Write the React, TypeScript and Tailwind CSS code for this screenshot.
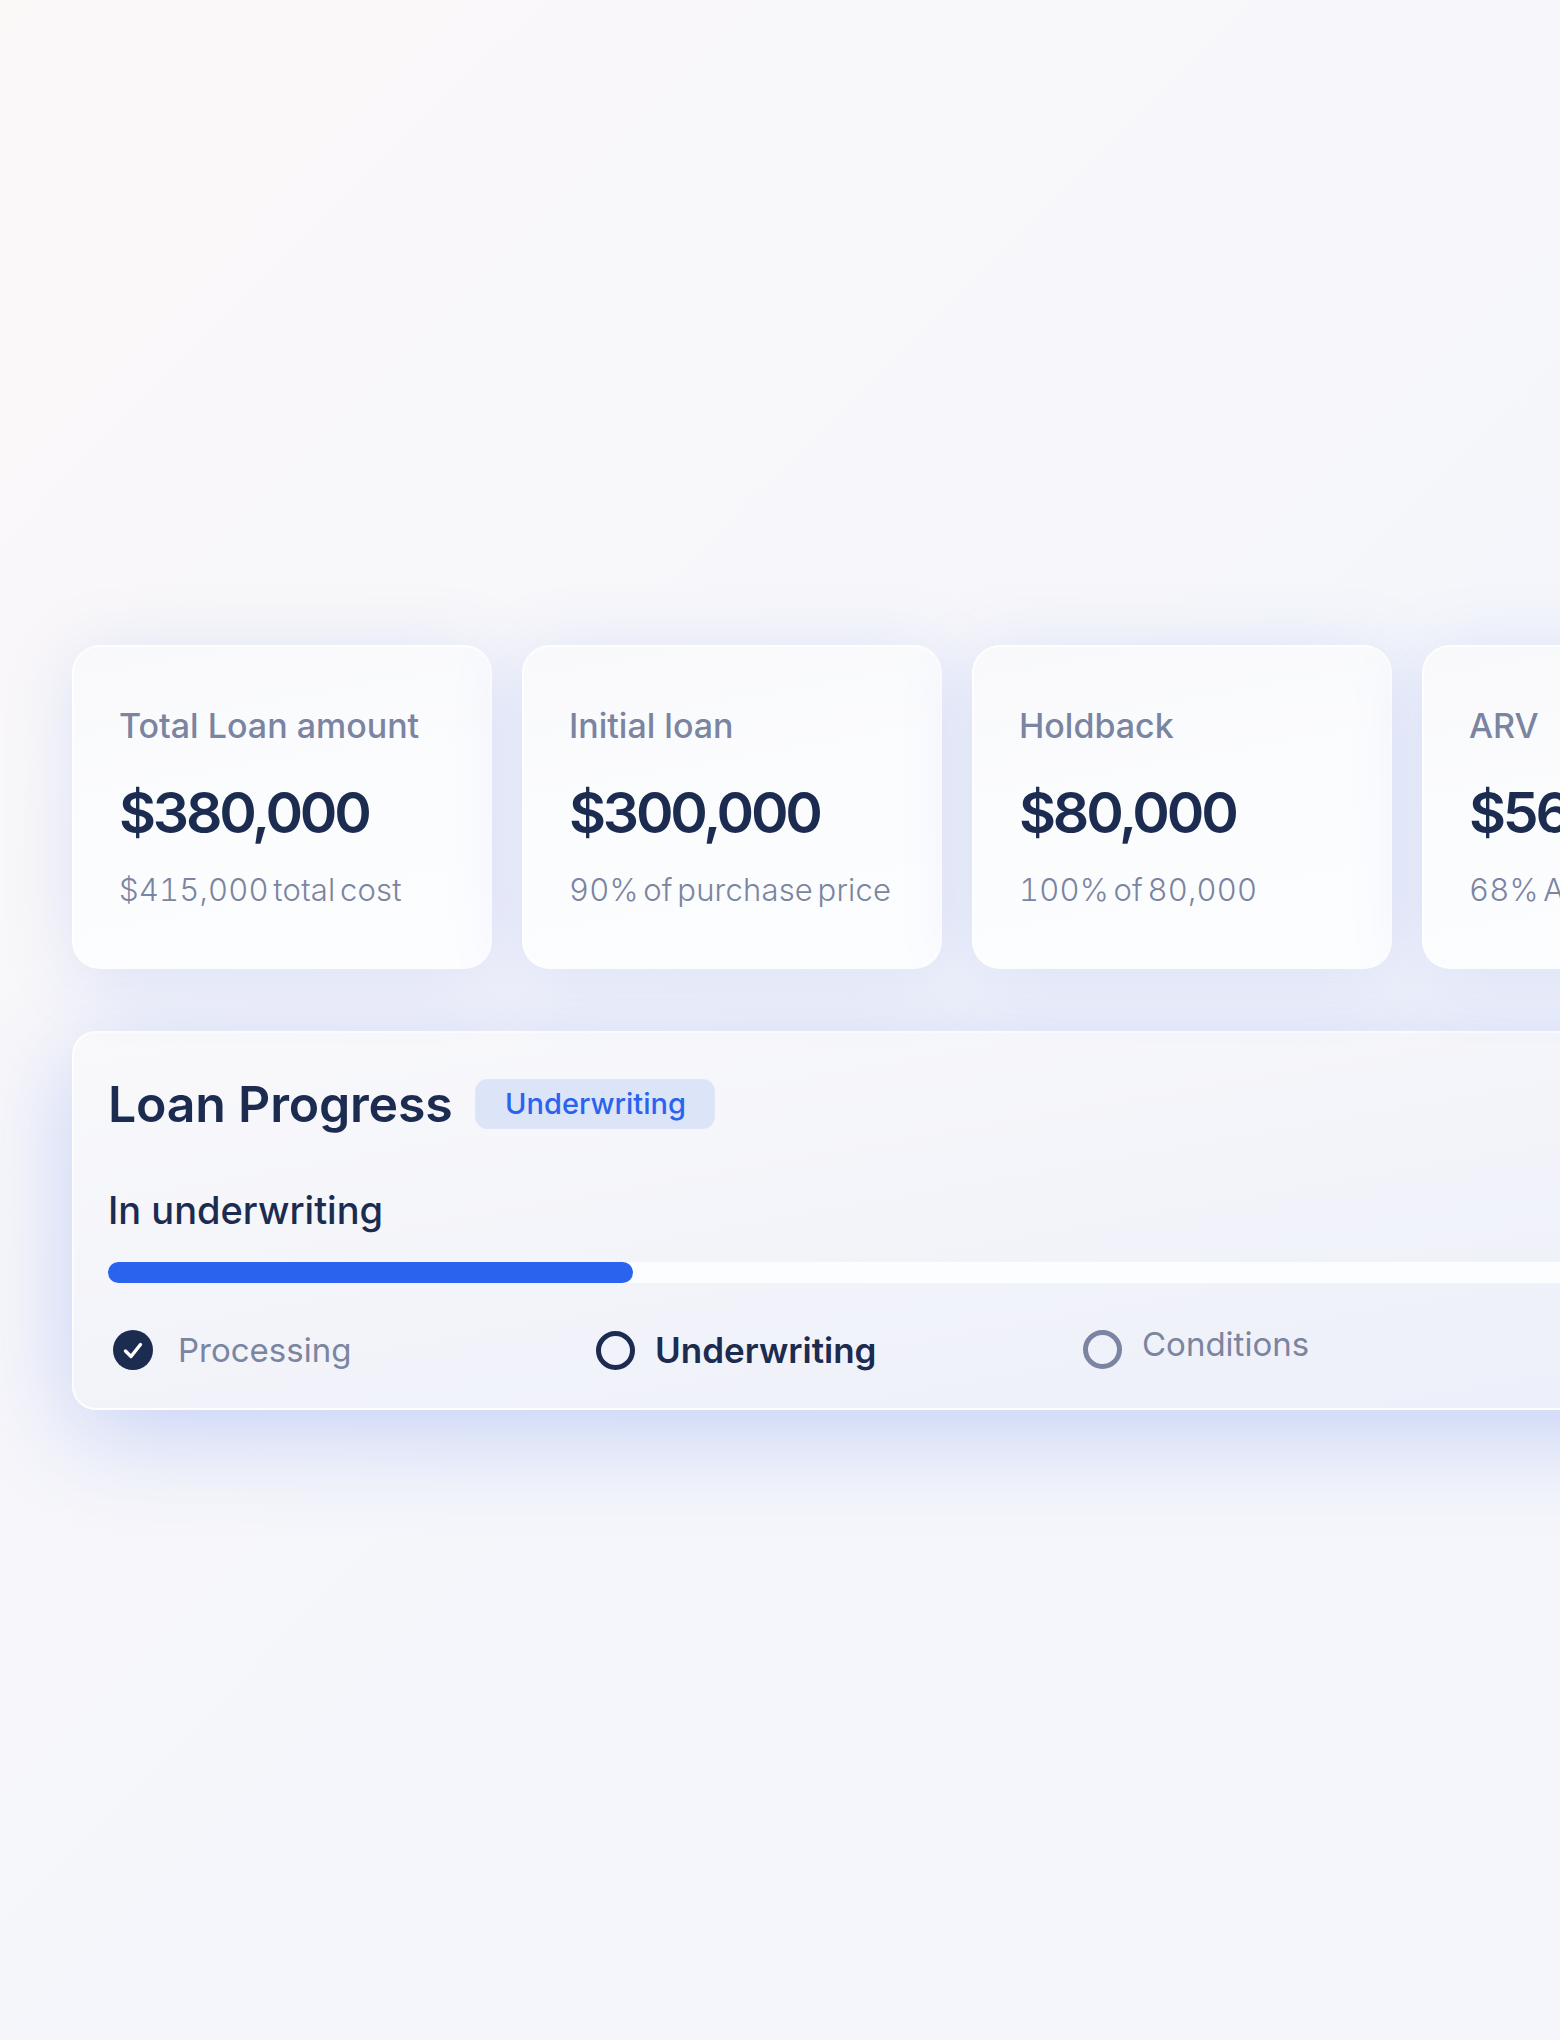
const stats = [
  { label: "Total Loan amount", value: "$380,000", note: "$415,000 total cost" },
  { label: "Initial loan", value: "$300,000", note: "90% of purchase price" },
  { label: "Holdback", value: "$80,000", note: "100% of 80,000" },
  { label: "ARV", value: "$560,000", note: "68% ARV" },
];

export default function App() {
  return (
    <div className="w-[1560px] h-[2040px] overflow-hidden pt-[645px] pl-[72px] bg-[linear-gradient(135deg,#fbf8f8_0%,#f8f7fa_30%,#f5f6fb_58%)] font-['Inter',sans-serif]">
      {/* Stat cards */}
      <div className="flex gap-[30px] w-[1800px]">
        {stats.map((stat) => (
          <div
            key={stat.label}
            className="w-[420px] h-[324px] shrink-0 rounded-[28px] border-2 border-white/70 bg-[linear-gradient(170deg,#f9f9fb_0%,#fbfcfe_45%,#fcfdff_100%)] pl-[45px] pt-[59px] shadow-[0_8px_70px_rgba(90,130,235,0.18)]"
          >
            <p className="text-[34px] leading-[40px] font-medium text-[#7b84a0]">{stat.label}</p>
            <p className="mt-[32px] text-[57px] leading-[70px] font-semibold tracking-[-3.2px] text-[#1c2b50]">
              {stat.value}
            </p>
            <p className="mt-[22px] text-[31px] leading-[40px] font-light tabular-nums tracking-[0.2px] [word-spacing:-4px] text-[#7b84a0]">
              {stat.note}
            </p>
          </div>
        ))}
      </div>

      {/* Loan progress */}
      <div className="mt-[62px] w-[1700px] h-[379px] rounded-[24px] border-2 border-white/80 bg-[linear-gradient(170deg,#f9f9fb_0%,#f3f4fa_50%,#eceffa_100%)] pl-[34px] pt-[41px] shadow-[0_20px_100px_rgba(80,120,235,0.3)]">
        <div className="flex items-center gap-[23px]">
          <h2 className="text-[50px] leading-[60px] font-semibold tracking-[-0.2px] text-[#1c2b50]">Loan Progress</h2>
          <span className="flex h-[50px] w-[240px] items-center justify-center rounded-[12px] border border-[#e1e7f7] bg-[#dce4f7] text-[29px] font-medium text-[#2a63ee]">
            Underwriting
          </span>
        </div>

        <p className="mt-[50px] text-[38px] leading-[52px] font-medium text-[#1c2b50]">In underwriting</p>

        <div className="mt-[26px] h-[21px] bg-[#fcfdff] rounded-full">
          <div className="h-full w-[525px] rounded-full bg-[#2a63ee]" />
        </div>

        <div className="flex mt-[47px] pl-[5px]">
          <div className="flex w-[483px] items-center gap-[25px]">
            <svg width="40" height="40" viewBox="0 0 40 40">
              <circle cx="20" cy="20" r="20" fill="#1c2b50" />
              <path d="M12.5 21l5.5 5.5 9.5-12" fill="none" stroke="#fff" strokeWidth="3.4" strokeLinecap="round" strokeLinejoin="round" />
            </svg>
            <span className="text-[33px] leading-[40px] text-[#7b84a0]">Processing</span>
          </div>
          <div className="flex w-[487px] items-center gap-[20px]">
            <span className="size-[39px] rounded-full border-[5px] border-[#1c2b50]" />
            <span className="text-[35px] leading-[40px] font-semibold text-[#1c2b50]">Underwriting</span>
          </div>
          <div className="flex items-start gap-[20px]">
            <span className="size-[39px] rounded-full border-[5px] border-[#7b84a0]" />
            <span className="-mt-[6px] text-[33px] leading-[40px] text-[#7b84a0]">Conditions</span>
          </div>
        </div>
      </div>
    </div>
  );
}
